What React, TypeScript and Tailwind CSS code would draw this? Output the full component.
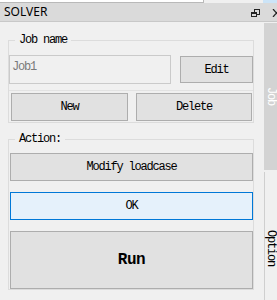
const mono = "font-['Liberation_Mono','DejaVu_Sans_Mono',monospace] text-[12px] tracking-[-1.2px]";

function Btn({ label, className }: { label: string; className: string }) {
  return (
    <button
      className={`flex items-center justify-center border border-[#adadad] bg-[#e1e1e1] text-black ${mono} ${className}`}
    >
      {label}
    </button>
  );
}

export default function App() {
  return (
    <div className="flex h-[300px] w-[277px] flex-col overflow-hidden bg-[#f0f0f0]">
      {/* strip of the window above */}
      <div className="flex h-[3px] shrink-0">
        <div className="w-[204px] border-b border-r border-[#b9b9b9] bg-white" />
        <div className="flex-1" />
        <div className="w-[14px] bg-[#cce4f7]" />
      </div>

      {/* dock title */}
      <div className="flex h-[19px] shrink-0 items-center border-b border-[#c8c8c8] bg-[#dadada] pl-[4px]">
        <span className="font-['Noto_Sans',sans-serif] text-[12px] leading-none text-black">SOLVER</span>
        <svg className="ml-auto mt-[2px]" width="9" height="8" viewBox="0 0 9 8">
          <rect x="3.5" y="0.5" width="5" height="5" fill="none" stroke="#222" />
          <rect x="0.5" y="3.5" width="5" height="4" fill="#dadada" stroke="#222" />
          <rect x="0" y="3" width="6" height="2" fill="#222" />
        </svg>
        <svg className="ml-[12px] mr-[-4px] mt-[2px] shrink-0" width="9" height="8" viewBox="0 0 9 8">
          <path d="M1 0 L8 8 M8 0 L1 8" stroke="#222" strokeWidth="1.2" />
        </svg>
      </div>

      <div className="flex min-h-0 flex-1">
        {/* main panel */}
        <div className="w-[264px] shrink-0 pl-[8px]">
          <fieldset className="mt-[12px] w-[246px] border border-[#dcdcdc]">
            <legend className={`ml-[6px] px-[4px] leading-[13px] text-black ${mono}`}>Job name</legend>
            <div className="flex items-center pt-[8px]">
              <div
                className={`h-[29px] w-[162px] border border-[#cacaca] bg-[#f0f0f0] pl-[2px] pt-[5px] leading-[13px] text-[#7a7a7a] ${mono}`}
              >
                Job1
              </div>
              <Btn label="Edit" className="ml-[9px] h-[27px] w-[73px]" />
            </div>
            <div className="mt-[6px] flex gap-[8px] border-t border-[#e2e2e2] pb-[1px] pl-[2px] pr-[1px] pt-[2px]">
              <Btn label="New" className="h-[28px] w-[117px]" />
              <Btn label="Delete" className="h-[28px] w-[116px]" />
            </div>
          </fieldset>

          <fieldset className="mt-[10px] w-[246px] border border-[#dcdcdc]">
            <legend className={`ml-[6px] px-[4px] leading-[13px] text-black ${mono}`}>Action:</legend>
            <div className="flex flex-col gap-[11px] pl-[1px] pt-[7px]">
              <Btn label="Modify loadcase" className="h-[28px] w-[243px]" />
              <button
                className={`flex h-[28px] w-[243px] items-center justify-center border border-[#0078d7] bg-[#e5f1fb] text-black ${mono}`}
              >
                OK
              </button>
              <button className="flex h-[58px] w-[243px] items-center justify-center border border-[#adadad] bg-[#e1e1e1] font-['Liberation_Mono','DejaVu_Sans_Mono',monospace] text-[16px] font-bold tracking-[-0.4px] text-black">
                Run
              </button>
            </div>
          </fieldset>
        </div>

        {/* side tabs */}
        <div className="flex w-[13px] shrink-0 flex-col">
          <div className="mt-[1px] flex h-[147px] shrink-0 justify-center bg-[#d3d3d3] pt-[64px]">
            <span className={`leading-[12px] text-white [writing-mode:vertical-rl] ${mono}`}>Job</span>
          </div>
          <div className="mt-[2px] flex flex-1 justify-center border-l border-[#cfcfcf] pt-[58px]">
            <span className={`leading-[12px] text-black [writing-mode:vertical-rl] ${mono}`}>Option</span>
          </div>
        </div>
      </div>
    </div>
  );
}
